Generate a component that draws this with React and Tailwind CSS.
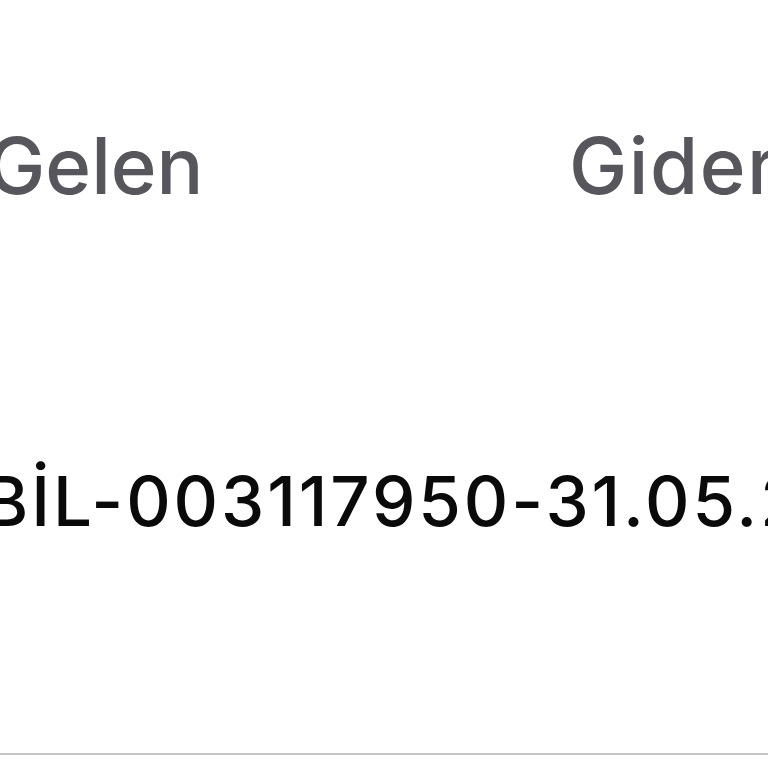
export default function App() {
  return (
    <div className="w-[768px] h-[768px] bg-white overflow-hidden flex flex-col" style={{ fontFamily: 'Inter, "Noto Sans", sans-serif' }}>
      <div className="flex pt-[127px] ml-[-13px]">
        <div className="w-[582px] shrink-0 text-[78px] leading-none font-medium tracking-[0px] text-[#56565c]">Gelen</div>
        <div className="shrink-0 text-[78px] leading-none font-medium tracking-[1.5px] text-[#56565c] whitespace-nowrap">Gider</div>
      </div>
      <div className="flex-1 flex flex-col">
        <div className="mt-[262px] ml-[-17px] text-[69px] leading-none font-medium tracking-[2.9px] text-[#0a0a0a] whitespace-nowrap">BİL-003117950-31.05.2024</div>
        <div className="flex-1" />
        <div className="h-[2px] bg-[#c4c4c4] mb-[13px]" />
      </div>
    </div>
  );
}
